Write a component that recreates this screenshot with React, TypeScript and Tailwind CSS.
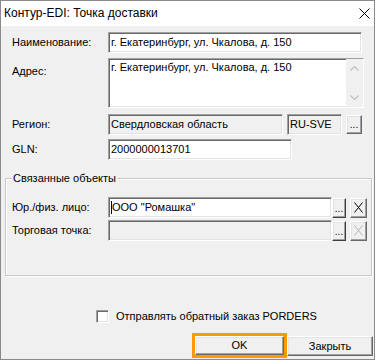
const sunken =
  "border border-t-[#a0a0a0] border-l-[#a0a0a0] border-r-white border-b-white shadow-[inset_1px_1px_0_#696969,inset_-1px_-1px_0_#e3e3e3]";
const raised =
  "border border-t-white border-l-white border-r-[#696969] border-b-[#696969] shadow-[inset_-1px_-1px_0_#a0a0a0,inset_1px_1px_0_#e3e3e3] bg-[#f0f0f0]";

function Label({ text, className = "" }: { text: string; className?: string }) {
  return <div className={`w-[96px] shrink-0 ${className}`}>{text}</div>;
}

function Field({
  value,
  width,
  gray,
  children,
}: {
  value?: string;
  width: string;
  gray?: boolean;
  children?: React.ReactNode;
}) {
  return (
    <div
      className={`flex h-[21px] shrink-0 items-center pl-[2px] ${width} ${sunken} ${
        gray ? "bg-[#f0f0f0]" : "bg-white"
      }`}
    >
      {children}
      {value}
    </div>
  );
}

function Dots({ className = "" }: { className?: string }) {
  return (
    <div className={`flex shrink-0 items-end justify-center pb-[3px] ${raised} ${className}`}>
      <span className="text-[10px] leading-none">...</span>
    </div>
  );
}

function Cross({ disabled }: { disabled?: boolean }) {
  const c = disabled ? "#b4b4b4" : "#000";
  return (
    <div className={`flex h-[20px] w-[17px] shrink-0 items-center justify-center ${raised}`}>
      <svg width="9" height="11" viewBox="0 0 9 11">
        <path d="M0.5 0.5 L8.5 10.5 M8.5 0.5 L0.5 10.5" stroke={c} strokeWidth="1" fill="none" />
      </svg>
    </div>
  );
}

function Chevron({ up }: { up?: boolean }) {
  return (
    <svg width="9" height="5" viewBox="0 0 9 5">
      <path
        d={up ? "M0.5 4.5 L4.5 0.5 L8.5 4.5" : "M0.5 0.5 L4.5 4.5 L8.5 0.5"}
        stroke="#c0c0c0"
        strokeWidth="1.2"
        fill="none"
      />
    </svg>
  );
}

export default function App() {
  return (
    <div className="h-[361px] w-[380px] bg-white font-['Liberation_Sans',Arial,sans-serif] text-[11px] leading-[13px] text-black">
      <div className="flex h-[360px] w-[375px] flex-col overflow-hidden border border-[#8a8a8a]">
        {/* title bar */}
        <div className="flex h-[25px] shrink-0 items-center justify-between bg-white pl-[3px] pr-[4px]">
          <span className="text-[12px]">Контур-EDI: Точка доставки</span>
          <svg width="11" height="11" viewBox="0 0 11 11">
            <path d="M0.5 0.5 L10.5 10.5 M10.5 0.5 L0.5 10.5" stroke="#000" strokeWidth="1" fill="none" />
          </svg>
        </div>

        <div className="flex flex-1 flex-col bg-[#f0f0f0] pl-[4px]">
          <div className="ml-[7px] mt-[6px] flex items-center">
            <Label text="Наименование:" />
            <Field width="w-[254px]" value="г. Екатеринбург, ул. Чкалова, д. 150" />
          </div>

          <div className="ml-[7px] mt-[5px] flex items-start">
            <Label text="Адрес:" className="pt-[7px]" />
            <div className={`flex h-[50px] w-[256px] bg-white ${sunken}`}>
              <div className="flex-1 pl-[2px] pt-[2px]">г. Екатеринбург, ул. Чкалова, д. 150</div>
              <div className="flex w-[17px] flex-col items-center justify-between bg-[#f0f0f0] py-[7px]">
                <Chevron up />
                <Chevron />
              </div>
            </div>
          </div>

          <div className="ml-[7px] mt-[6px] flex items-center">
            <Label text="Регион:" />
            <Field width="w-[175px]" gray value="Свердловская область" />
            <div className="ml-[4px]">
              <Field width="w-[55px]" gray value="RU-SVE" />
            </div>
            <div className={`ml-[4px] flex h-[19px] w-[16px] items-end justify-center pb-[3px] ${raised}`}>
              <span className="text-[10px] leading-none">...</span>
            </div>
          </div>

          <div className="ml-[7px] mt-[4px] flex items-center">
            <Label text="GLN:" />
            <Field width="w-[184px]" value="2000000013701" />
          </div>

          {/* group box */}
          <div className="relative mt-[18px] h-[98px] w-[367px] border border-[#c8c8c8] pl-[6px] shadow-[inset_1px_1px_0_white,1px_1px_0_white]">
            <span className="absolute left-[6px] top-[-7px] bg-[#f0f0f0] px-[1px]">Связанные объекты</span>
            <div className="mt-[18px] flex items-center">
              <Label text="Юр./физ. лицо:" />
              <Field width="w-[224px]" value='ООО "Ромашка"'>
                <span className="h-[13px] w-[1px] bg-black" />
              </Field>
              <Dots className="h-[20px] w-[14px] !border-r-[#404040] !border-b-[#404040]" />
              <div className="ml-[4px]">
                <Cross />
              </div>
            </div>
            <div className="mt-[2px] flex items-center">
              <Label text="Торговая точка:" />
              <Field width="w-[224px]" gray />
              <Dots className="h-[20px] w-[14px] !border-r-[#404040] !border-b-[#404040]" />
              <div className="ml-[4px]">
                <Cross disabled />
              </div>
            </div>
          </div>

          <div className="ml-[91px] mt-[34px] flex items-center">
            <div className={`h-[13px] w-[13px] bg-white ${sunken}`} />
            <span className="ml-[7px]">Отправлять обратный заказ PORDERS</span>
          </div>

          <div className="ml-[187px] mt-[10px] flex items-start">
            <div className="h-[25px] w-[95px] border-[3px] border-[#ff9900]">
              <div className={`flex h-full w-full items-center justify-center ${raised}`}>OK</div>
            </div>
            <div className={`mt-[3px] flex h-[20px] w-[86px] items-center justify-center ${raised}`}>
              Закрыть
            </div>
          </div>
        </div>
      </div>
    </div>
  );
}
